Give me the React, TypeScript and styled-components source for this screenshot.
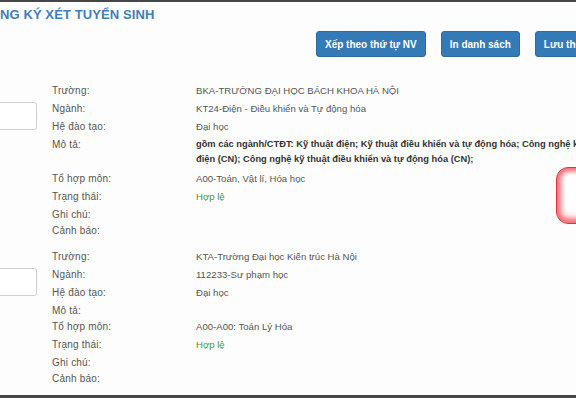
import styled, { createGlobalStyle } from "styled-components";


interface IRow
{
	label: string;
	value?: string;
	kind?: "text" | "desc" | "ok";
}


const GlobalStyle = createGlobalStyle`
	html, body {
		margin: 0;
		padding: 0;
		background: #fdfdfd;
		overflow: hidden;
	}

	body {
		font-family: "Liberation Sans", Arial, sans-serif;
	}
`;


const FrameSC = styled.div`
	position: relative;
	height: 398px;
	box-sizing: border-box;
	border-top: 2px solid #474747;
	border-bottom: 3px solid #474747;
	overflow: hidden;
`;


const PageSC = styled.div`
	width: 640px;
	margin-left: -19px;
	padding-top: 5px;
`;


const TitleSC = styled.h3`
	margin: 0;
	font-size: 13px;
	line-height: 16px;
	font-weight: bold;
	color: #3d80bd;
	letter-spacing: 0.1px;
`;


const ToolbarSC = styled.div`
	display: flex;
	gap: 15px;
	margin-top: 8px;
	padding-left: 335px;
`;


const ButtonSC = styled.button`
	height: 26px;
	padding: 0 8px;
	border: 1px solid #2e6da4;
	border-radius: 3px;
	background: #337ab7;
	color: #fff;
	font-family: "Liberation Sans", Arial, sans-serif;
	font-size: 10px;
	font-weight: bold;
	white-space: nowrap;
	cursor: pointer;
`;


const ListSC = styled.div`
	display: flex;
	flex-direction: column;
	gap: 10px;
	margin-top: 25px;
`;


const EntrySC = styled.div`
	display: flex;
	gap: 15px;
`;


const PriorityBoxSC = styled.div`
	width: 56px;
	height: 28px;
	margin-top: 20px;
	box-sizing: border-box;
	border: 1px solid #cfcfcf;
	border-radius: 3px;
	background: #fff;
	flex-shrink: 0;
`;


const InfoSC = styled.div`
	display: flex;
	flex-direction: column;
	flex: 1;
`;


const RowSC = styled.div`
	display: flex;
	align-items: flex-start;
	font-size: 10px;
	color: #555;
`;


const LabelSC = styled.div`
	width: 144px;
	flex-shrink: 0;
	padding-top: 1px;
	line-height: 15px;
	letter-spacing: 0.2px;
`;


const ValueSC = styled.div<{ $kind?: "text" | "desc" | "ok" }>`
	padding: 1px 0;
	font-size: 9.6px;
	line-height: 16px;
	white-space: nowrap;
	color: ${p => p.$kind === "ok" ? "#3d9b3d" : p.$kind === "desc" ? "#333" : "#555"};
	font-weight: ${p => p.$kind === "desc" ? "bold" : "normal"};

	${p => p.$kind === "desc" && `
		font-size: 9.3px;
		line-height: 15px;
		padding: 1px 0 3px;
	`}
`;


const ScrollHintSC = styled.div`
	position: absolute;
	left: 556px;
	top: 165px;
	width: 48px;
	height: 57px;
	box-sizing: border-box;
	border: 1px solid #d9343f;
	border-radius: 12px;
	background: #fff;
	box-shadow: inset 0 0 4px 3px #f2707a, inset 0 -2px 6px 4px #f7a3a8;
`;


const entries: IRow[][] = [
	[
		{ label: "Trường:", value: "BKA-TRƯỜNG ĐẠI HỌC BÁCH KHOA HÀ NỘI" },
		{ label: "Ngành:", value: "KT24-Điện - Điều khiển và Tự động hóa" },
		{ label: "Hệ đào tạo:", value: "Đại học" },
		{ label: "Mô tả:", value: "gồm các ngành/CTĐT: Kỹ thuật điện; Kỹ thuật điều khiển và tự động hóa; Công nghệ kỹ thuật\nđiện (CN); Công nghệ kỹ thuật điều khiển và tự động hóa (CN);", kind: "desc" },
		{ label: "Tổ hợp môn:", value: "A00-Toán, Vật lí, Hóa học" },
		{ label: "Trạng thái:", value: "Hợp lệ", kind: "ok" },
		{ label: "Ghi chú:" },
		{ label: "Cảnh báo:" },
	],
	[
		{ label: "Trường:", value: "KTA-Trường Đại học Kiến trúc Hà Nội" },
		{ label: "Ngành:", value: "112233-Sư phạm học" },
		{ label: "Hệ đào tạo:", value: "Đại học" },
		{ label: "Mô tả:" },
		{ label: "Tổ hợp môn:", value: "A00-A00: Toán Lý Hóa" },
		{ label: "Trạng thái:", value: "Hợp lệ", kind: "ok" },
		{ label: "Ghi chú:" },
		{ label: "Cảnh báo:" },
	],
];


export default function App()
{
	return (
		<>
			<GlobalStyle />
			<FrameSC>
				<PageSC>
					<TitleSC>ĐĂNG KÝ XÉT TUYỂN SINH</TitleSC>

					<ToolbarSC>
						<ButtonSC>Xếp theo thứ tự NV</ButtonSC>
						<ButtonSC>In danh sách</ButtonSC>
						<ButtonSC>Lưu thông tin</ButtonSC>
					</ToolbarSC>

					<ListSC>
						{entries.map((rows, i) => (
							<EntrySC key={i}>
								<PriorityBoxSC />
								<InfoSC>
									{rows.map(row => (
										<RowSC key={row.label}>
											<LabelSC>{row.label}</LabelSC>
											<ValueSC $kind={row.kind}>
												{row.value?.split("\n").map((line, j) => (
													<div key={j}>{line}</div>
												))}
											</ValueSC>
										</RowSC>
									))}
								</InfoSC>
							</EntrySC>
						))}
					</ListSC>
				</PageSC>

				<ScrollHintSC />
			</FrameSC>
		</>
	);
}
